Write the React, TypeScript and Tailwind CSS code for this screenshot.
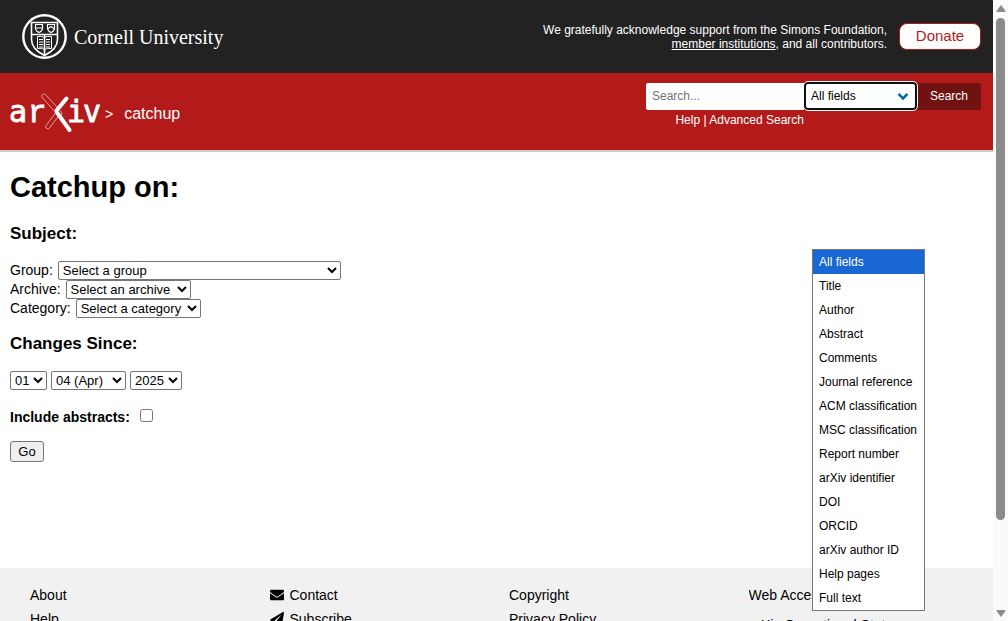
import React from "react";
import { FaEnvelope, FaPaperPlane } from "react-icons/fa";

const FIELDS = [
  "All fields",
  "Title",
  "Author",
  "Abstract",
  "Comments",
  "Journal reference",
  "ACM classification",
  "MSC classification",
  "Report number",
  "arXiv identifier",
  "DOI",
  "ORCID",
  "arXiv author ID",
  "Help pages",
  "Full text",
];

function CornellLogo() {
  return (
    <a href="#cornell" aria-label="Cornell University" className="block">
      <svg width="210" height="46" viewBox="0 0 210 46" fill="none" stroke="#fff">
        <circle cx="22.5" cy="22.5" r="21.2" strokeWidth="2.4" />
        <path d="M9.5 8.5h26v17c0 7-5 12-13 16c-8-4-13-9-13-16z" strokeWidth="1.6" />
        <path d="M9.5 20.5h26M22.5 20.5V41" strokeWidth="1.6" />
        <path d="M13.500 10.500h7v4.500q-1 2.500-3.500 3.500q-2.500-1-3.500-3.500zM13.500 14h7" strokeWidth="1.2" />
        <path d="M25.500 10.500h7v4.500q-1 2.500-3.500 3.500q-2.500-1-3.500-3.500zM25.500 15l3.500-2.500l3.500 2.500" strokeWidth="1.2" />
        <path d="M15.500 22.500q4-.8 7 1q3-1.800 7-1v12q-4-.8-7 1q-3-1.800-7-1z" />
        <path d="M17 25.500h4M17 28h4M17 30.500h4M17 33h4M24 25.500h4M24 28h4M24 30.500h4M24 33h4" />
        <text x="52" y="30" fontSize="20" fill="#fff" stroke="none" className="font-['Liberation_Serif',serif]">
          Cornell University
        </text>
      </svg>
    </a>
  );
}

function ArxivLogo() {
  return (
    <a href="#home" aria-label="arXiv" className="block">
      <svg width="92" height="42" viewBox="0 0 92 42" fill="#fff" className="overflow-visible">
        <g fontSize="30" className="font-['DejaVu_Sans_Mono',monospace]" stroke="#fff" strokeWidth="0.8">
          <text x="-1" y="30">a</text>
          <text x="18" y="30" fontSize="31" className="font-['Liberation_Mono',monospace]">r</text>
          <text x="57" y="30">i</text>
          <text x="73" y="30">v</text>
        </g>
        <g fill="none" stroke="#e3a0a0" strokeWidth="0.9">
          <rect x="0" y="-2.300" width="28" height="4.600" rx="2.300" transform="translate(32.500 2.500) rotate(48)" />
          <rect x="0" y="-2.100" width="20" height="4.200" rx="2.100" transform="translate(36.500 36.500) rotate(-53)" />
        </g>
        <path d="M56.500 6.500L46.500 18.500M47 20.500L59.500 38" fill="none" stroke="#fff" strokeWidth="4" strokeLinecap="round" />
      </svg>
    </a>
  );
}

function Select({ id, options, className }: { id: string; options: string[]; className: string }) {
  return (
    <select
      id={id}
      aria-label={id}
      className={"h-[19px] rounded-[2px] border border-[#767676] bg-white text-[13px] leading-4 text-black " + className}
    >
      {options.map((o) => (
        <option key={o}>{o}</option>
      ))}
    </select>
  );
}

function SearchForm() {
  return (
    <form className="flex flex-col" onSubmit={(e) => e.preventDefault()}>
      <div className="flex h-7 items-center text-xs">
        <input
          aria-label="Search term or terms"
          placeholder="Search..."
          className="h-[27px] w-[158px] rounded-l-[2px] bg-white px-1.5 text-black placeholder-[#757575] outline-none"
        />
        <div className="relative">
          <select
            aria-label="Field to search"
            className="h-7 w-[113px] appearance-none rounded-[4px] border-2 border-[#101010] bg-white px-[5px] text-black outline outline-1 outline-white"
          >
            {FIELDS.map((f) => (
              <option key={f}>{f}</option>
            ))}
          </select>
          <svg className="pointer-events-none absolute top-2.5 right-2" width="12" height="9" viewBox="0 0 12 9" fill="none">
            <path d="M1.500 1.800L6 6.300L10.500 1.800" stroke="#0068ac" strokeWidth="2.600" />
          </svg>
          <ul className="absolute top-[167px] left-2 z-10 w-[113px] border border-[#767676] bg-white text-black">
            {FIELDS.map((f, i) => (
              <li
                key={f}
                className={i === 0 ? "h-6 bg-[#1967d2] px-1.5 leading-6 text-white" : "h-6 px-1.5 leading-6 whitespace-nowrap"}
              >
                {f}
              </li>
            ))}
          </ul>
        </div>
        <button className="h-[27px] w-16 rounded-r-[2px] bg-[#701112] text-xs text-white">Search</button>
      </div>
      <p className="w-[158px] self-start text-right text-xs leading-5 whitespace-nowrap">
        <a href="#help">Help</a> | <a href="#advanced">Advanced Search</a>
      </p>
    </form>
  );
}

function Scrollbar() {
  return (
    <div aria-hidden="true" className="flex w-[15px] shrink-0 flex-col items-center justify-between bg-[#fafafa] pt-[5px] pb-1">
      <svg width="10" height="8" viewBox="0 0 10 8" fill="#8b8b8b">
        <path d="M5 0L9.500 6Q9.500 7 8.500 7H1.500Q.5 7 .5 6z" />
      </svg>
      <div className="mt-[5px] mb-auto h-[82%] w-[9px] rounded-full bg-[#8b8b8b]" />
      <svg width="10" height="8" viewBox="0 0 10 8" fill="#8b8b8b">
        <path d="M5 8L9.500 2Q9.500 1 8.500 1H1.500Q.5 1 .5 2z" />
      </svg>
    </div>
  );
}

export default function App() {
  return (
    <div className="flex h-screen overflow-hidden bg-white font-['Liberation_Sans',Arial,sans-serif] text-black">
      <div className="flex min-w-0 flex-1 flex-col overflow-hidden">
        <header className="shrink-0 text-white">
          <div className="flex h-[73px] items-center justify-between bg-[#222] pr-3 pl-[22px]">
            <CornellLogo />
            <div className="flex items-center gap-3">
              <p className="text-right text-xs leading-[14px]">
                We gratefully acknowledge support from the Simons Foundation,
                <br />
                <a href="#members" className="underline">member institutions</a>, and all contributors.
              </p>
              <a
                href="#donate"
                className="flex h-[27px] w-[82px] items-center justify-center rounded-lg border border-[#b31b1b] bg-white text-[15px] text-[#b31b1b]"
              >
                Donate
              </a>
            </div>
          </div>
          <div className="flex h-[79px] items-start justify-between border-b-2 border-[#ccc] bg-[#b31b1b] pt-[9px] pr-3 pl-2.5">
            <div className="flex items-center gap-[3px] pt-2.5 text-base">
              <ArxivLogo />
              <span className="pt-0.5 text-sm">&gt;</span>
              <span className="pt-0.5 pl-2">catchup</span>
            </div>
            <SearchForm />
          </div>
        </header>

        <main className="h-[416px] shrink-0 px-2.5 pt-[17px] text-sm">
          <h1 className="text-[29px] leading-9 font-bold">Catchup on:</h1>
          <h2 className="mt-[19px] text-[17px] leading-5 font-bold">Subject:</h2>
          <div className="mt-[17px] leading-[18px]">
            <div className="flex h-[19px] items-start gap-[5px]">
              <label htmlFor="group">Group:</label>
              <Select id="group" options={["Select a group"]} className="w-[283px]" />
            </div>
            <div className="flex h-[19px] items-start gap-[5px]">
              <label htmlFor="archive">Archive:</label>
              <Select id="archive" options={["Select an archive"]} className="w-[125px]" />
            </div>
            <div className="flex h-[19px] items-start gap-[5px]">
              <label htmlFor="category">Category:</label>
              <Select id="category" options={["Select a category"]} className="w-[125px]" />
            </div>
          </div>
          <h2 className="mt-4 text-[17px] leading-5 font-bold">Changes Since:</h2>
          <div className="mt-[17px] flex gap-1">
            <Select id="day" options={["01"]} className="w-[37px]" />
            <Select id="month" options={["04 (Apr)"]} className="w-[75px]" />
            <Select id="year" options={["2025"]} className="w-[52px]" />
          </div>
          <div className="mt-[17px] flex h-5 items-center gap-2.5">
            <label htmlFor="abstracts" className="font-bold">Include abstracts:</label>
            <input id="abstracts" type="checkbox" className="mb-1 size-[13px]" />
          </div>
          <button className="mt-3.5 h-[21px] w-[34px] rounded-[3px] border border-[#767676] bg-[#efefef] text-[13px] leading-4">
            Go
          </button>
        </main>

        <footer className="grid shrink-0 grid-cols-4 bg-[#f1f1f1] pt-[15px] pr-[5px] pb-4 pl-[30px] text-sm leading-6">
          <ul>
            <li><a href="#about">About</a></li>
            <li><a href="#help">Help</a></li>
          </ul>
          <ul>
            <li>
              <a href="#contact" className="flex items-center gap-1.5"><FaEnvelope className="size-[14px]" />Contact</a>
            </li>
            <li>
              <a href="#subscribe" className="flex items-center gap-1.5"><FaPaperPlane className="size-[14px]" />Subscribe</a>
            </li>
          </ul>
          <ul>
            <li><a href="#copyright">Copyright</a></li>
            <li><a href="#privacy">Privacy Policy</a></li>
          </ul>
          <ul>
            <li className="max-w-44 truncate"><a href="#accessibility">Web Accessibility Assistance</a></li>
            <li className="pt-1.5"><a href="#status">arXiv Operational Status</a></li>
          </ul>
        </footer>
      </div>
      <Scrollbar />
    </div>
  );
}
